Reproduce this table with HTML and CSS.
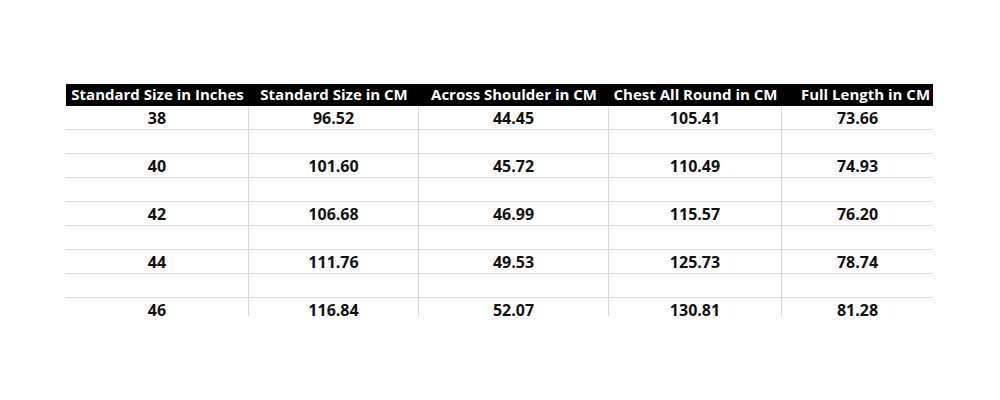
FILE: index.html
```html
<!DOCTYPE html>
<html>
<head>
<meta charset="utf-8">
<link rel="stylesheet" href="styles.css">
</head>
<body>
<div class="sheet">
  <div class="table">
    <div class="row head">
      <div class="cell">Standard Size in Inches</div>
      <div class="cell">Standard Size in CM</div>
      <div class="cell">Across Shoulder in CM</div>
      <div class="cell">Chest All Round in CM</div>
      <div class="cell shifted">Full Length in CM</div>
    </div>
    <div class="row"><div class="cell">38</div><div class="cell">96.52</div><div class="cell">44.45</div><div class="cell">105.41</div><div class="cell">73.66</div></div>
    <div class="row"><div class="cell"></div><div class="cell"></div><div class="cell"></div><div class="cell"></div><div class="cell"></div></div>
    <div class="row"><div class="cell">40</div><div class="cell">101.60</div><div class="cell">45.72</div><div class="cell">110.49</div><div class="cell">74.93</div></div>
    <div class="row"><div class="cell"></div><div class="cell"></div><div class="cell"></div><div class="cell"></div><div class="cell"></div></div>
    <div class="row"><div class="cell">42</div><div class="cell">106.68</div><div class="cell">46.99</div><div class="cell">115.57</div><div class="cell">76.20</div></div>
    <div class="row"><div class="cell"></div><div class="cell"></div><div class="cell"></div><div class="cell"></div><div class="cell"></div></div>
    <div class="row"><div class="cell">44</div><div class="cell">111.76</div><div class="cell">49.53</div><div class="cell">125.73</div><div class="cell">78.74</div></div>
    <div class="row"><div class="cell"></div><div class="cell"></div><div class="cell"></div><div class="cell"></div><div class="cell"></div></div>
    <div class="row"><div class="cell">46</div><div class="cell">116.84</div><div class="cell">52.07</div><div class="cell">130.81</div><div class="cell">81.28</div></div>
  </div>
</div>
</body>
</html>
```
FILE: styles.css
```css
html, body {
  margin: 0;
  padding: 0;
  background: #ffffff;
}
.sheet {
  padding: 84px 0 0 66px;
}
.table {
  width: 867px;
  height: 232px;
  overflow: hidden;
  font-family: "Open Sans", "Liberation Sans", sans-serif;
  font-weight: 700;
  font-size: 16px;
  color: #111111;
}
.row {
  display: grid;
  grid-template-columns: 183px 170px 190px 173px 151px;
  height: 24px;
  border-bottom: 1px solid #dcdcdc;
  box-sizing: border-box;
}
.cell {
  display: flex;
  align-items: center;
  justify-content: center;
  white-space: nowrap;
  border-right: 1px solid #d9d9d9;
}
.cell:last-child {
  border-right: none;
}
.row.head {
  height: 22px;
  background: #000000;
  color: #ffffff;
  border-bottom: none;
  font-size: 15px;
}
.row.head .cell {
  border-right: none;
  padding-bottom: 2px;
}
.row.head .cell.shifted {
  padding-left: 16px;
}
```
